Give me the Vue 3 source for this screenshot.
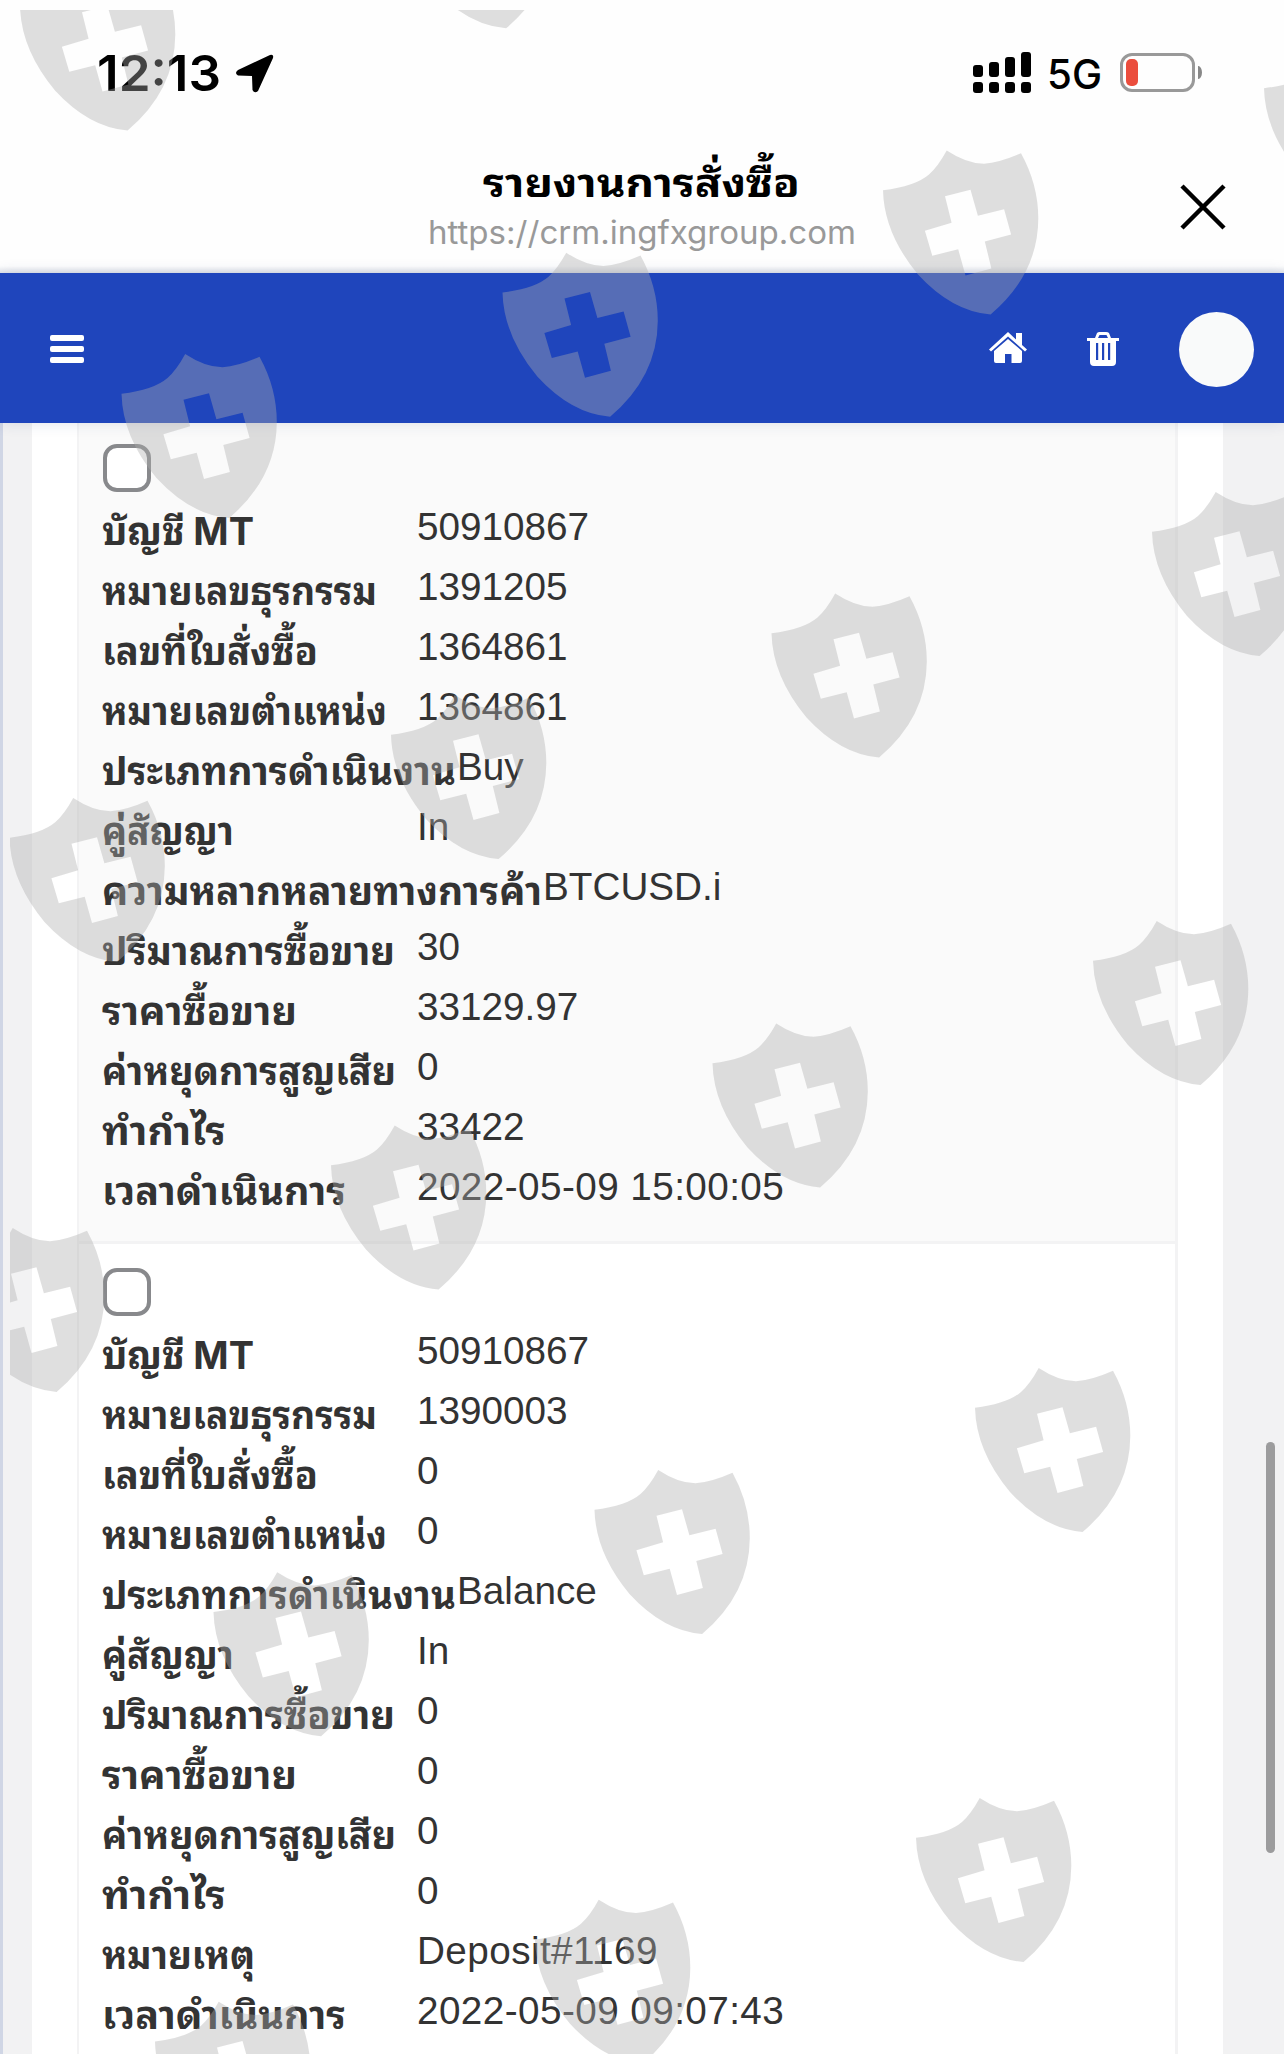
<template>
  <div class="screen">
    <div class="status-bar">
      <svg class="clock" width="136" height="74">
        <text x="3" y="54" textLength="124" lengthAdjust="spacingAndGlyphs">12:13</text>
      </svg>
      <svg class="location" width="42" height="42" viewBox="0 0 42 42">
        <path d="M36 2 L4 17 Q0 20 4 22.500 L18 23 L18.500 37 Q20.500 41 24 38 L39 5 Q40 1 36 2Z" />
      </svg>
      <svg class="signal" width="60" height="44" viewBox="0 0 60 44">
        <rect v-for="(top, i) in [14, 11, 6, 1]" :key="i" :x="i * 16" :y="top" width="10" :height="26 - top" rx="3" />
        <rect v-for="i in 4" :key="'dot' + i" :x="i * 16 - 16" y="31" width="10" height="11" rx="3" />
      </svg>
      <svg class="network" width="60" height="60">
        <text x="-1" y="44" textLength="55" lengthAdjust="spacingAndGlyphs">5G</text>
      </svg>
      <div class="battery"><i></i></div>
    </div>

    <div class="browser-bar">
      <svg class="title-text" width="440" height="120" overflow="visible">
        <text class="title" x="61" y="61" textLength="317" lengthAdjust="spacingAndGlyphs">รายงานการสั่งซื้อ</text>
        <text class="url" x="6" y="108" textLength="428" lengthAdjust="spacingAndGlyphs">https://crm.ingfxgroup.com</text>
      </svg>
      <svg class="close" width="46" height="46" viewBox="0 0 46 46">
        <path d="M2 2 L44 44 M44 2 L2 44" />
      </svg>
    </div>

    <header class="navbar">
      <div class="menu"><i></i><i></i><i></i></div>
      <svg class="home" width="38" height="31" viewBox="0 0 38 31">
        <path d="M19 0 L27 7.500 V1 H33 V13 L38 17.500 L36 19.500 L19 4.500 L2 19.500 L0 17.500Z" />
        <path d="M19 7 L33 19 V29 Q33 31 31 31 H22.500 V22 H16 V31 H7 Q5 31 5 29 V19Z" />
      </svg>
      <svg class="trash" width="32" height="34" viewBox="0 0 32 34">
        <path fill-rule="evenodd" d="M0 6 H8 L10 1 Q11 0 12.500 0 H19 Q21 0 22 1 L24 6 H32 V9 H29 V30 Q29 34 25 34 H7 Q3 34 3 30 V9 H0Z M11 6 H21 L19.500 3 H12.500Z M9 11 V28 H11.200 V11Z M15 11 V28 H17.200 V11Z M21 11 V28 H23.200 V11Z" />
      </svg>
      <div class="avatar"></div>
    </header>

    <main class="page">
      <div class="card">
        <div v-for="(record, i) in records" :key="i" class="record">
          <div class="checkbox"></div>
          <div v-for="row in record" :key="row[0]" class="row">
            <svg class="label" :width="Math.max(315, row[1] + 1)" height="60" overflow="visible">
              <text x="-1" y="41" :textLength="row[1]" lengthAdjust="spacingAndGlyphs">{{ row[0] }}</text>
            </svg>
            <span class="value" :class="{ wide: row[2].length > 9 }">{{ row[2] }}</span>
          </div>
        </div>
      </div>
    </main>

    <div class="scrollbar"></div>

    <svg class="watermark" width="1284" height="2054" viewBox="0 0 1284 2054">
      <defs>
        <clipPath id="area"><rect x="10" y="10" width="1274" height="2044" /></clipPath>
        <path id="shield" fill-rule="evenodd" :d="shieldPath" />
      </defs>
      <g clip-path="url(#area)">
        <use v-for="(s, i) in shields" :key="i" href="#shield" :x="s[0]" :y="s[1]" />
      </g>
    </svg>
  </div>
</template>

<script setup>
// [label, label width, value]
const records = [
  [
    ['บัญชี MT', 152, '50910867'],
    ['หมายเลขธุรกรรม', 275, '1391205'],
    ['เลขที่ใบสั่งซื้อ', 216, '1364861'],
    ['หมายเลขตำแหน่ง', 285, '1364861'],
    ['ประเภทการดำเนินงาน', 354, 'Buy'],
    ['คู่สัญญา', 132, 'In'],
    ['ความหลากหลายทางการค้า', 440, 'BTCUSD.i'],
    ['ปริมาณการซื้อขาย', 293, '30'],
    ['ราคาซื้อขาย', 195, '33129.97'],
    ['ค่าหยุดการสูญเสีย', 294, '0'],
    ['ทำกำไร', 124, '33422'],
    ['เวลาดำเนินการ', 244, '2022-05-09 15:00:05']
  ],
  [
    ['บัญชี MT', 152, '50910867'],
    ['หมายเลขธุรกรรม', 275, '1390003'],
    ['เลขที่ใบสั่งซื้อ', 216, '0'],
    ['หมายเลขตำแหน่ง', 285, '0'],
    ['ประเภทการดำเนินงาน', 354, 'Balance'],
    ['คู่สัญญา', 132, 'In'],
    ['ปริมาณการซื้อขาย', 293, '0'],
    ['ราคาซื้อขาย', 195, '0'],
    ['ค่าหยุดการสูญเสีย', 294, '0'],
    ['ทำกำไร', 124, '0'],
    ['หมายเหตุ', 153, 'Deposit#1169'],
    ['เวลาดำเนินการ', 244, '2022-05-09 09:07:43']
  ]
]

const shieldPath =
  'M0 39.700 Q32 36 46 24 Q55 16 63.700 0 Q84 13.300 101 13.300 Q117 12 138 2.700 Q155.300 34 155.300 68 Q155 124 107.600 164 Q69 161 35 124 Q1 83 0 39.700Z' +
  'M62 45.700 L87.500 39.300 L94.900 65.300 L121.100 58.700 L128.100 84 L101.800 91 L108.400 118 L82.500 125 L75.200 98.700 L49.300 105.300 L41.900 80.300 L68.600 72.300Z'

const shields = [
  [20, -33.5], [398.5, -135.7], [1264, 48.5],
  [883, 150.5], [502.5, 252.7], [121.5, 354],
  [1152, 492], [771.5, 593.5], [391, 695], [9.5, 798],
  [1093, 921], [712.5, 1023.5], [331, 1125.5], [-51, 1228],
  [975, 1368], [594.5, 1470], [213.5, 1572.3],
  [916, 1798], [535, 1899.7], [155, 2001.7]
]
</script>

<style>
body {
  margin: 0;
}
</style>

<style scoped>
.screen {
  position: relative;
  width: 1284px;
  height: 2054px;
  overflow: hidden;
  background: #fefefe;
  font-family: "Liberation Sans", Arial, sans-serif;
}

.screen svg {
  display: block;
  flex-shrink: 0;
}

.status-bar {
  display: flex;
  align-items: flex-start;
  box-sizing: border-box;
  height: 140px;
  padding: 45px 87px 0 94px;
}

.clock {
  margin-top: -8px;
  font: 600 50px Inter, sans-serif;
}

.location {
  margin: 8px 0 0 4px;
}

.signal {
  margin: 6px 0 0 auto;
}

.network {
  margin-left: 15px;
  font: 500 41px Inter, sans-serif;
}

.battery {
  position: relative;
  box-sizing: border-box;
  width: 75px;
  height: 39px;
  margin: 8px 2px 0 12px;
  padding: 3px;
  border: 3px solid #999;
  border-radius: 12px;
}

.battery i {
  display: block;
  width: 12px;
  height: 27px;
  border-radius: 5px;
  background: #eb4d3d;
}

.battery::after {
  content: "";
  position: absolute;
  top: 10px;
  right: -10px;
  width: 4px;
  height: 13px;
  border-radius: 0 4px 4px 0 / 0 7px 7px 0;
  background: #888;
}

.browser-bar {
  display: flex;
  justify-content: space-between;
  box-sizing: border-box;
  height: 133px;
  padding: 0 58px 0 422px;
  background: linear-gradient(#fefefe 126px, #e2e5ea 133px);
}

.title-text {
  margin-top: -4px;
}

.title {
  font: 700 39px Inter, "Noto Sans Thai Looped", Loma, Garuda, Waree, "Noto Sans Thai", sans-serif;
}

.url {
  font: 400 32px Inter, sans-serif;
  fill: #999;
}

.close {
  margin-top: 44px;
  fill: none;
  stroke: #000;
  stroke-width: 4.5;
}

.navbar {
  position: relative;
  display: flex;
  align-items: center;
  box-sizing: border-box;
  height: 150px;
  padding: 2px 30px 0 50px;
  background: #1f45bc;
  fill: #fff;
  box-shadow: 0 0 14px rgba(40, 60, 110, 0.14);
}

.menu {
  display: grid;
  gap: 5px;
  width: 34px;
}

.menu i {
  height: 6px;
  border-radius: 2px;
  background: #fff;
}

.home {
  margin: -3px 0 0 auto;
}

.trash {
  margin: 0 60px;
}

.avatar {
  width: 75px;
  height: 75px;
  border-radius: 50%;
  background: #f9fafa;
}

.page {
  box-sizing: border-box;
  height: 1631px;
  padding: 0 61px 0 29px;
  border-left: 3px solid #d0d6e5;
  background: #f2f2f3;
}

.card {
  box-sizing: border-box;
  height: 100%;
  padding: 0 45px;
  background: #fff;
}

.record {
  box-sizing: border-box;
  height: 824px;
  padding: 23px 0 0 24px;
  border: 3px solid #f3f3f4;
  border-width: 0 3px 0 2px;
}

.record:first-child {
  height: 821px;
  padding-top: 21px;
  border-bottom-width: 3px;
  background: #fafafa;
}

.record:last-child {
  padding-top: 24px;
}

.checkbox {
  box-sizing: border-box;
  width: 48px;
  height: 48px;
  margin-bottom: 12px;
  border: 4px solid #88898c;
  border-radius: 14px;
  background: #fff;
}

.row {
  display: flex;
  height: 60px;
  color: #333;
}

.label {
  font: 700 38px Inter, "Noto Sans Thai Looped", Loma, Garuda, Waree, "Noto Sans Thai", sans-serif;
  fill: #333;
}

.value {
  margin-left: -1px;
  font-size: 38.7px;
  line-height: 46px;
  white-space: pre;
}

.wide {
  letter-spacing: 0.42px;
}

.scrollbar {
  position: absolute;
  top: 1442px;
  left: 1266px;
  width: 9px;
  height: 411px;
  border-radius: 5px;
  background: #9c9c9d;
}

.watermark {
  position: absolute;
  top: 0;
  left: 0;
  fill: rgba(173, 173, 173, 0.39);
}
</style>
